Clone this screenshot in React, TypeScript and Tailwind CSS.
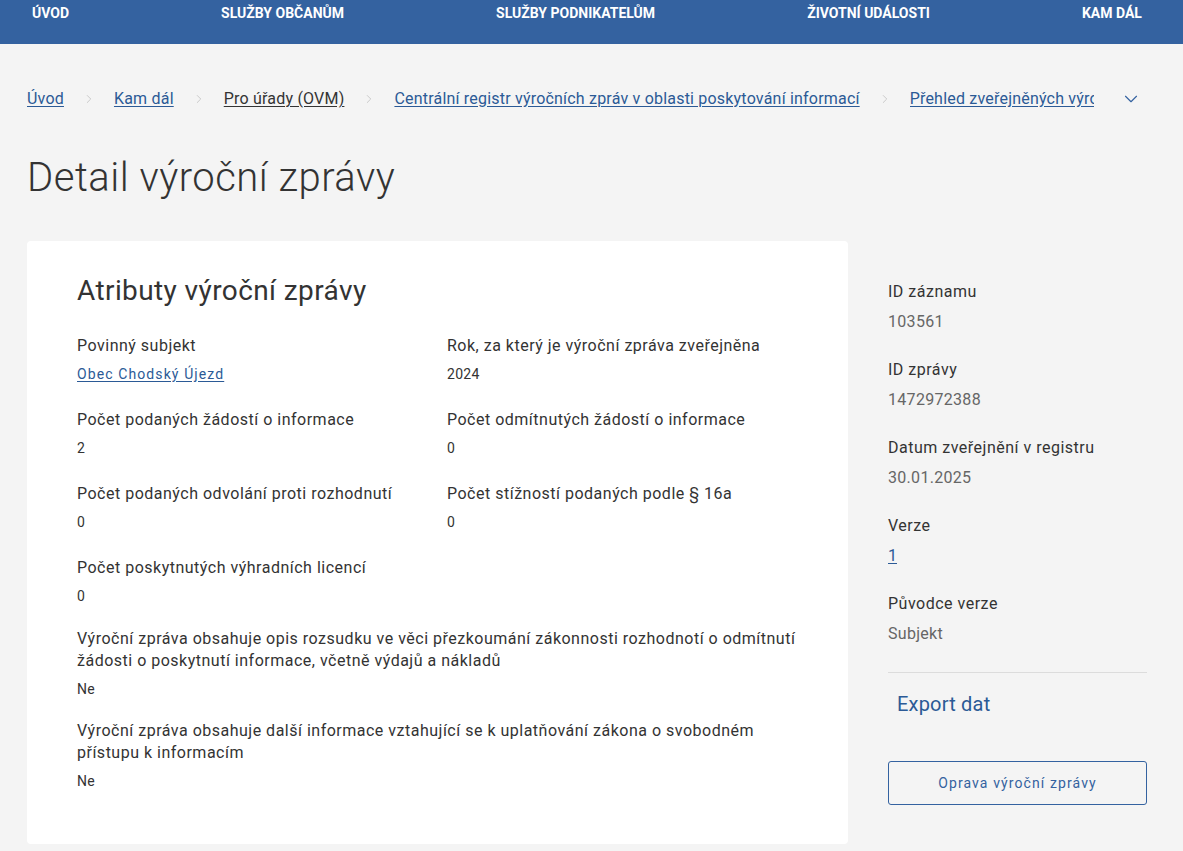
import { ChevronRight, ChevronDown } from "lucide-react";

const navItems = ["Úvod", "Služby občanům", "Služby podnikatelům", "Životní události", "Kam dál"];

const attributes = [
  { label: "Povinný subjekt", value: "Obec Chodský Újezd", link: true },
  { label: "Rok, za který je výroční zpráva zveřejněna", value: "2024" },
  { label: "Počet podaných žádostí o informace", value: "2" },
  { label: "Počet odmítnutých žádostí o informace", value: "0" },
  { label: "Počet podaných odvolání proti rozhodnutí", value: "0" },
  { label: "Počet stížností podaných podle § 16a", value: "0" },
  { label: "Počet poskytnutých výhradních licencí", value: "0" },
];

const longAttributes = [
  {
    label:
      "Výroční zpráva obsahuje opis rozsudku ve věci přezkoumání zákonnosti rozhodnotí o odmítnutí žádosti o poskytnutí informace, včetně výdajů a nákladů",
    value: "Ne",
  },
  {
    label:
      "Výroční zpráva obsahuje další informace vztahující se k uplatňování zákona o svobodném přístupu k informacím",
    value: "Ne",
  },
];

const meta = [
  { label: "ID záznamu", value: "103561" },
  { label: "ID zprávy", value: "1472972388" },
  { label: "Datum zveřejnění v registru", value: "30.01.2025" },
  { label: "Verze", value: "1", link: true },
  { label: "Původce verze", value: "Subjekt" },
];

export default function App() {
  return (
    <div className="min-h-screen bg-[#f4f4f4] font-['Roboto',sans-serif] text-[#333]">
      {/* Top navigation */}
      <header className="h-[44px] bg-[#3462a0]">
        <nav className="flex justify-between pl-[32px] pr-[41px] pt-[4px]">
          {navItems.map((item) => (
            <a key={item} className="text-[14px] font-bold uppercase leading-[18px] text-white">
              {item}
            </a>
          ))}
        </nav>
      </header>

      <main className="px-[27px]">
        {/* Breadcrumbs */}
        <div className="flex items-center pt-[44px] text-[16px] leading-[20px] tracking-[0.2px]">
          <div className="flex min-w-0 items-center overflow-hidden">
            <a className="shrink-0 text-[#2b5a96] underline underline-offset-2">Úvod</a>
            <ChevronRight className="mx-[18px] shrink-0 text-[#c4c4c4]" size={14} strokeWidth={1.5} />
            <a className="shrink-0 text-[#2b5a96] underline underline-offset-2">Kam dál</a>
            <ChevronRight className="mx-[18px] shrink-0 text-[#c4c4c4]" size={14} strokeWidth={1.5} />
            <a className="shrink-0 text-[#333] underline underline-offset-2">Pro úřady (OVM)</a>
            <ChevronRight className="mx-[18px] shrink-0 text-[#c4c4c4]" size={14} strokeWidth={1.5} />
            <a className="shrink-0 text-[#2b5a96] underline underline-offset-2">
              Centrální registr výročních zpráv v oblasti poskytování informací
            </a>
            <ChevronRight className="mx-[18px] shrink-0 text-[#c4c4c4]" size={14} strokeWidth={1.5} />
            <a className="w-[184px] shrink-0 overflow-hidden whitespace-nowrap text-[#2b5a96] underline underline-offset-2">
              Přehled zveřejněných výročních zpráv
            </a>
          </div>
          <ChevronDown className="ml-[26px] shrink-0 text-[#3462a0]" size={22} strokeWidth={1.25} />
        </div>

        <h1 className="mt-[44px] text-[40px] font-light leading-[48px] tracking-[0.5px] text-[#333]">
          Detail výroční zprávy
        </h1>

        <div className="mt-[39px] flex items-start gap-[40px]">
          {/* Attributes card */}
          <section className="w-[821px] shrink-0 rounded-[4px] bg-white px-[50px] pb-[52px] pt-[34px]">
            <h2 className="text-[28px] font-normal leading-[32px] tracking-[0.4px]">Atributy výroční zprávy</h2>
            <div className="mt-[28px] grid grid-cols-[370px_1fr] gap-y-[24px]">
              {attributes.map((a) => (
                <div key={a.label}>
                  <div className="text-[16px] leading-[22px] tracking-[0.5px]">{a.label}</div>
                  <div
                    className={
                      a.link
                        ? "mt-[6px] text-[14px] leading-[22px] tracking-[1.1px] text-[#2b5a96] underline underline-offset-2"
                        : "mt-[6px] text-[14px] leading-[22px] tracking-[0.3px]"
                    }
                  >
                    {a.value}
                  </div>
                </div>
              ))}
            </div>
            <div className="mt-[21px] flex flex-col gap-y-[20px]">
              {longAttributes.map((a) => (
                <div key={a.label}>
                  <div className="text-[16px] leading-[22px] tracking-[0.5px]">{a.label}</div>
                  <div className="mt-[6px] text-[14px] leading-[22px] tracking-[0.3px]">{a.value}</div>
                </div>
              ))}
            </div>
          </section>

          {/* Side meta */}
          <aside className="w-[259px] shrink-0 pt-[39px]">
            <div className="flex flex-col gap-y-[24px]">
              {meta.map((m) => (
                <div key={m.label}>
                  <div className="text-[16px] leading-[24px] tracking-[0.5px]">{m.label}</div>
                  <div
                    className={
                      m.link
                        ? "mt-[6px] text-[16px] leading-[24px] text-[#2b5a96] underline underline-offset-2"
                        : "mt-[6px] text-[16px] leading-[24px] tracking-[0.3px] text-[#666]"
                    }
                  >
                    {m.value}
                  </div>
                </div>
              ))}
            </div>
            <div className="mt-[26px] border-t border-[#dcdcdc]" />
            <a className="ml-[9px] mt-[17px] block text-[20px] leading-[28px] tracking-[0.2px] text-[#2b5a96]">Export dat</a>
            <button className="mt-[43px] h-[44px] w-full rounded-[3px] border border-[#3462a0] bg-transparent text-[14px] tracking-[1.1px] text-[#3462a0]">
              Oprava výroční zprávy
            </button>
          </aside>
        </div>
      </main>
    </div>
  );
}
